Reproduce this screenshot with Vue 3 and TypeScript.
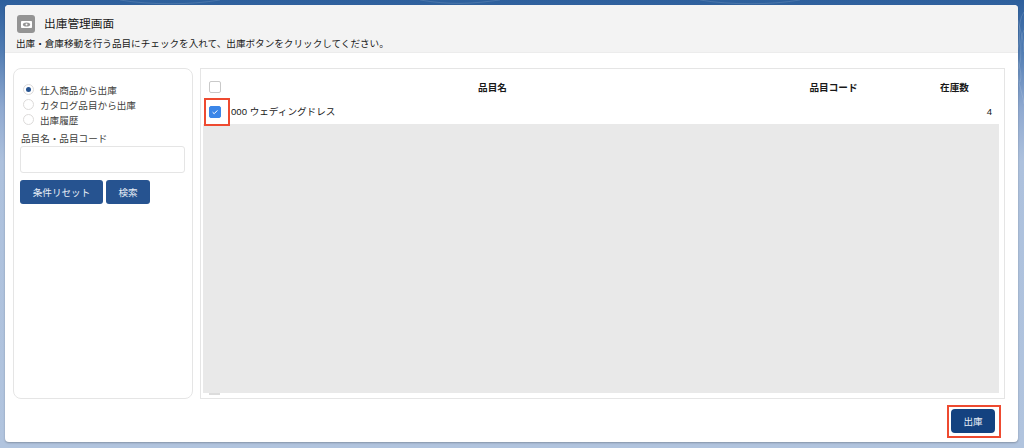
<script setup lang="ts">
const radios = [
  { label: '仕入商品から出庫', on: true },
  { label: 'カタログ品目から出庫', on: false },
  { label: '出庫履歴', on: false },
]
</script>

<template>
  <div class="page">
    <svg class="texture" width="1024" height="448" viewBox="0 0 1024 448" fill="none" stroke="#fff" stroke-opacity="0.22" stroke-width="0.6">
      <path d="M1024 12C1016 24 1022 36 1018 48S1024 70 1020 82" />
      <path d="M1024 30C1018 42 1023 56 1019 66S1022 90 1024 104" />
      <path d="M1018 20C1021 34 1024 40 1024 52" />
      <path d="M120 0C150 5 190 5 220 0M420 0C450 5 470 4 500 0M700 0C730 5 770 5 800 0" />
    </svg>
    <div class="card">
      <header class="head">
        <div class="title-row">
          <span class="icon">
            <svg width="11" height="7" viewBox="0 0 11 7">
              <rect x="0" y="0" width="11" height="7" rx="0.8" fill="#fff" />
              <ellipse cx="5.5" cy="3.5" rx="3.6" ry="2.1" fill="#949494" />
              <circle cx="5.5" cy="3.5" r="1" fill="#fff" />
            </svg>
          </span>
          <h1 class="title">出庫管理画面</h1>
        </div>
        <p class="sub">出庫・倉庫移動を行う品目にチェックを入れて、出庫ボタンをクリックしてください。</p>
      </header>
      <div class="main">
        <aside class="filter">
          <div class="radios">
            <div v-for="r in radios" :key="r.label" class="radio-row">
              <span class="radio"><span v-if="r.on" class="dot"></span></span>
              <span>{{ r.label }}</span>
            </div>
          </div>
          <label class="field-label">品目名・品目コード</label>
          <div class="input"></div>
          <div class="btns">
            <button class="btn reset">条件リセット</button>
            <button class="btn search">検索</button>
          </div>
        </aside>
        <section class="table">
          <div class="thead">
            <div class="c-check head-check"><span class="check"></span></div>
            <div class="c-name">品目名</div>
            <div class="c-code">品目コード</div>
            <div class="c-stock">在庫数</div>
          </div>
          <div class="row">
            <div class="c-check marked"><span class="check checked">
              <svg width="8" height="8" viewBox="0 0 8 8"><path d="M1.6 4.2 3.2 5.7 6.4 2.4" fill="none" stroke="#fff" stroke-width="1" /></svg>
            </span></div>
            <div class="c-item">000 ウェディングドレス</div>
            <div class="c-num">4</div>
          </div>
          <div class="empty"></div>
          <div class="thumb"></div>
        </section>
      </div>
      <footer class="foot">
        <div class="submit-mark"><button class="submit">出庫</button></div>
      </footer>
    </div>
  </div>
</template>

<style>
html, body { margin: 0; padding: 0; }
</style>

<style scoped>
.page {
  position: relative;
  width: 1024px;
  height: 448px;
  box-sizing: border-box;
  padding: 5px 6px 5px 5px;
  background: linear-gradient(180deg, #2d5f9c 0, #4f7bb2 11%, #8fa9d0 24%, #adc1dd 36%, #b1c4de 100%);
  font-family: "Liberation Sans", "Noto Sans CJK JP", sans-serif;
  color: #181818;
  overflow: hidden;
}
.texture { position: absolute; left: 0; top: 0; }
.card {
  position: relative;
  height: 437px;
  background: #fff;
  border-radius: 4px;
  box-shadow: 0 1px 2px rgba(0, 0, 0, 0.25);
  display: flex;
  flex-direction: column;
  overflow: hidden;
}
.head {
  height: 48px;
  box-sizing: border-box;
  background: #f3f3f3;
  border-bottom: 1px solid #ececec;
  padding: 10px 12px 0 12px;
}
.title-row { display: flex; align-items: center; height: 18px; }
.icon {
  width: 18px;
  height: 18px;
  border-radius: 3px;
  background: #949494;
  display: flex;
  align-items: center;
  justify-content: center;
}
.title {
  margin: 0 0 0 9px;
  font-size: 11.7px;
  font-weight: 400;
  line-height: 18px;
}
.sub {
  margin: 4px 0 0 -1px;
  font-size: 9.6px;
  line-height: 13px;
  white-space: nowrap;
}
.main {
  display: flex;
  align-items: flex-start;
  padding: 15px 13px 0 8px;
  gap: 7px;
}
.filter {
  width: 180px;
  height: 331px;
  box-sizing: border-box;
  border: 1px solid #e5e5e5;
  border-radius: 8px;
  padding: 13px 7px 0 6px;
}
.radios { padding-left: 3px; }
.radio-row {
  display: flex;
  align-items: center;
  height: 15px;
  gap: 6px;
  font-size: 9.6px;
  color: #3e3e3c;
}
.radio {
  width: 11px;
  height: 11px;
  box-sizing: border-box;
  border: 1px solid #dddbda;
  border-radius: 50%;
  display: flex;
  align-items: center;
  justify-content: center;
  background: #fff;
}
.dot { width: 5px; height: 5px; border-radius: 50%; background: #265390; }
.field-label {
  display: block;
  margin-top: 5px;
  padding-left: 1px;
  font-size: 9.6px;
  line-height: 13px;
  color: #3e3e3c;
}
.input {
  height: 25px;
  margin-top: 1px;
  border: 1px solid #e5e5e5;
  border-radius: 3px;
  background: #fff;
}
.btns { display: flex; gap: 3px; margin-top: 7px; }
.btn {
  height: 24px;
  padding: 0;
  border: 0;
  border-radius: 3px;
  background: #265390;
  color: #e8eef6;
  font: 9.6px "Liberation Sans", "Noto Sans CJK JP", sans-serif;
}
.reset { width: 83px; }
.search { width: 44px; }
.table {
  width: 805px;
  height: 331px;
  box-sizing: border-box;
  border: 1px solid #e5e5e5;
  padding: 0 5px 3px 2px;
  display: flex;
  flex-direction: column;
}
.thead {
  display: flex;
  align-items: center;
  height: 30px;
  box-sizing: border-box;
  padding-top: 6px;
  font-size: 9.6px;
  font-weight: 700;
  flex: none;
}
.c-check {
  width: 25px;
  height: 25px;
  flex: none;
  display: flex;
  align-items: center;
  justify-content: center;
  box-sizing: border-box;
}
.head-check { padding-right: 2px; }
.c-name { width: 529px; text-align: center; }
.c-code { width: 153px; text-align: center; }
.c-stock { width: 89px; text-align: center; }
.check {
  width: 12px;
  height: 12px;
  box-sizing: border-box;
  border: 1px solid #c9c9c9;
  border-radius: 2px;
  background: #fff;
  display: flex;
  align-items: center;
  justify-content: center;
}
.checked { background: #3b86e8; border-color: #3b86e8; }
.row {
  display: flex;
  align-items: center;
  height: 25px;
  flex: none;
  font-size: 9.6px;
}
.marked {
  position: relative;
  z-index: 1;
  height: 28px;
  width: 26px;
  border: 2px solid #ee4a30;
  margin: 0 0 0 1px;
  padding-right: 5px;
}
.c-item { margin: -1px 0 0 1px; flex: 1; }
.c-num { margin: -1px 7px 0 0; }
.empty { flex: 1; background: #e9e9e9; }
.thumb {
  width: 11px;
  height: 2px;
  margin-left: 6px;
  background: #dcdcdc;
  flex: none;
}
.foot {
  flex: 1;
  display: flex;
  justify-content: flex-end;
  align-items: flex-start;
  padding: 6px 17px 0 0;
}
.submit-mark {
  border: 2px solid #ee4a30;
  padding: 2px 4px 3px 2px;
}
.submit {
  display: block;
  width: 44px;
  height: 24px;
  padding: 0;
  border: 0;
  border-radius: 4px;
  background: #144280;
  color: #e8eef6;
  font: 9.6px "Liberation Sans", "Noto Sans CJK JP", sans-serif;
}
</style>
